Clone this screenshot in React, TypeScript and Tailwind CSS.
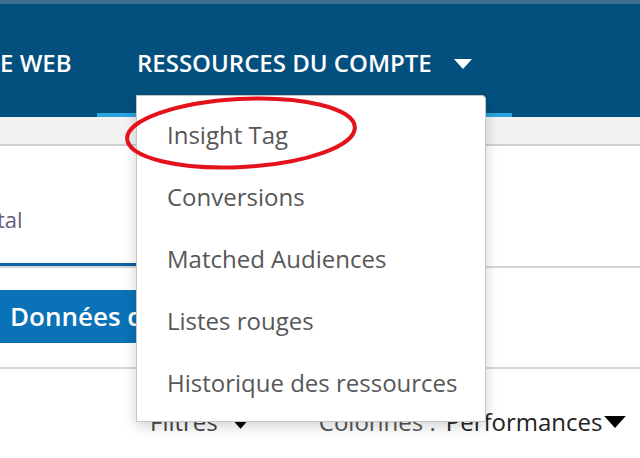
const MENU_ITEMS = ['Insight Tag', 'Conversions', 'Matched Audiences', 'Listes rouges', 'Historique des ressources'];

function Caret({ className }: { className?: string }) {
	return (
		<svg viewBox="0 0 18 10" className={className} fill="currentColor">
			<path d="M0 0h18L9 10z" />
		</svg>
	);
}

export default function App() {
	return (
		<div className="relative w-[640px] h-[458px] overflow-hidden bg-white font-['Open_Sans',sans-serif]">
			{/* top nav */}
			<div className="h-[4px] bg-[#3f6d8f]" />
			<div className="h-[113px] bg-[#03507e] flex items-end text-white text-[24px] font-semibold">
				<div className="h-full flex items-center pt-[4px] w-[97px]">E WEB</div>
				<div className="h-full flex items-center gap-[22px] pl-[40px] pr-[40px] border-b-4 border-[#2da4dd] pt-[8px]">
					<span>RESSOURCES DU COMPTE</span>
					<Caret className="w-[18px] h-[10px] mt-[2px]" />
				</div>
			</div>
			<div className="h-[29px] bg-[#f2f2f2] border-b-2 border-[#d0d0d0]" />

			{/* tabs */}
			<div className="h-[122px] flex border-b-2 border-[#d6d6d6]">
				<div className="w-[200px] flex items-center border-b-[3px] border-[#0a62a8] text-[22px] text-[#6a5a7c]">
					<span className="-ml-[3px] pt-[30px]">tal</span>
				</div>
			</div>

			{/* blue header */}
			<div className="mt-[22px] h-[53px] w-[300px] bg-[#0a72b6] flex items-center pl-[10px] text-white text-[26px] font-semibold">
				Données du
			</div>
			<div className="mt-[24px] border-b-2 border-[#d6d6d6]" />

			{/* filters row */}
			<div className="flex items-center h-[106px] text-[24px]">
				<div className="ml-[150px] flex items-center gap-[14px] text-[#444]">
					<span>Filtres</span>
					<Caret className="w-[17px] h-[10px] mt-[4px] text-black" />
				</div>
				<div className="ml-[70px] flex items-center text-[#555]">
					<span>Colonnes :</span>
					<span className="ml-[10px] text-[#222]">Performances</span>
					<Caret className="ml-[2px] w-[22px] h-[12px] text-black" />
				</div>
			</div>

			{/* dropdown menu */}
			<div className="absolute left-[136px] top-[95px] w-[350px] h-[327px] bg-white border border-[#c6c6c6] rounded-tr-[4px] shadow-[0_4px_14px_rgba(0,0,0,0.18)] pt-[8px]">
				{MENU_ITEMS.map((item) => (
					<div key={item} className="h-[62px] flex items-center pl-[30px] text-[24px] text-[#575757]">
						{item}
					</div>
				))}
			</div>

			{/* red highlight ellipse */}
			<svg className="absolute left-0 top-0 w-[640px] h-[458px] pointer-events-none" viewBox="0 0 640 458">
				<ellipse cx="241" cy="133" rx="114" ry="34" fill="none" stroke="#e3121b" strokeWidth="4" transform="rotate(-3 241 133)" />
			</svg>
		</div>
	);
}
